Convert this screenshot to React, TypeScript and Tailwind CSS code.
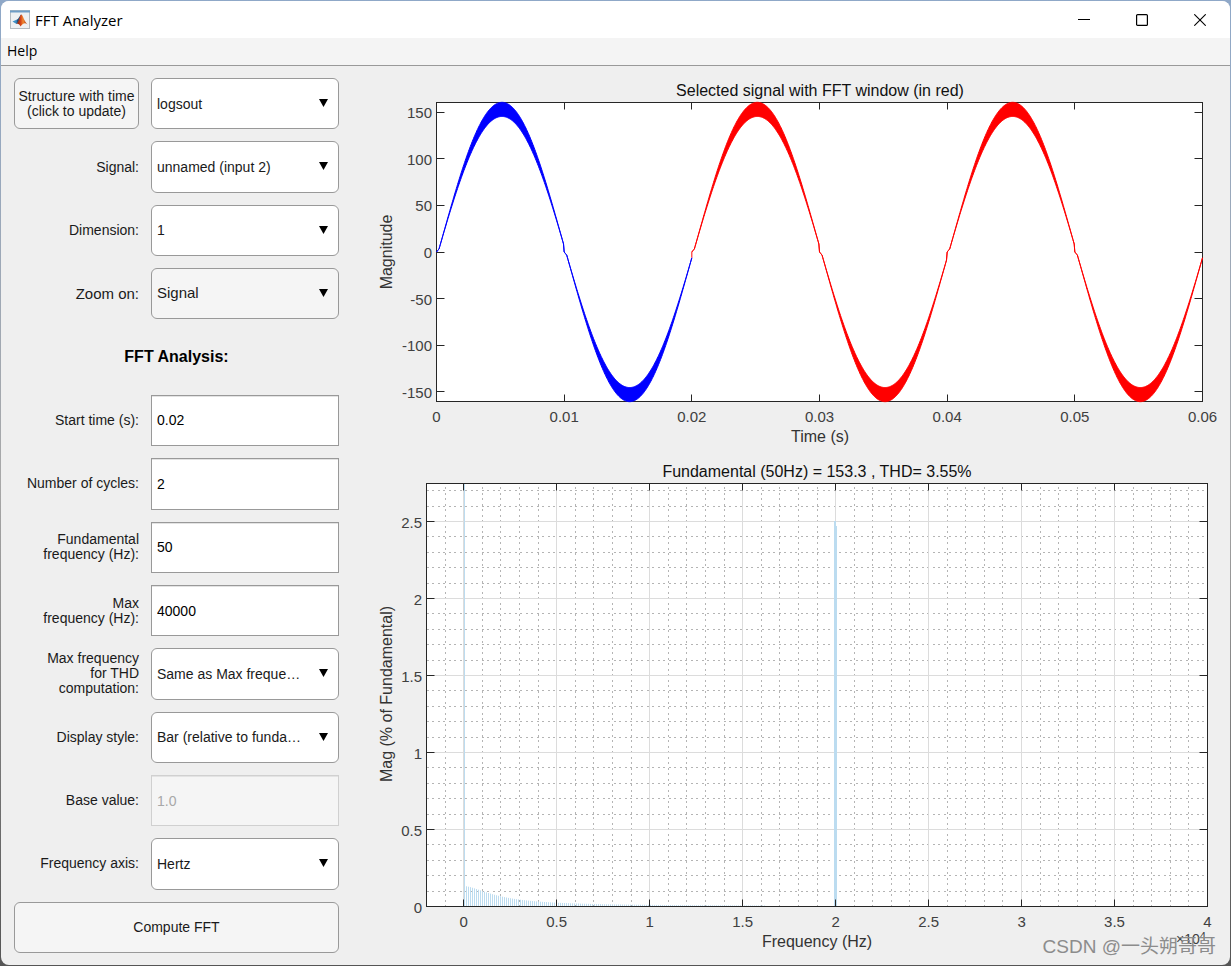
import type { ReactNode } from "react";

const selectRows = {
  data: ["logsout"],
  signal: ["unnamed (input 2)"],
  dimension: ["1"],
  zoom: ["Signal", "FFT window"],
  thd: ["Same as Max freque…"],
  display: ["Bar (relative to funda…"],
  axis: ["Hertz", "Harmonic order"],
};

/* ---------- form controls ---------- */

function Row({ id, label, large, children }: { id: string; label: string; large?: boolean; children: ReactNode }) {
  return (
    <div className="flex items-center gap-3">
      <label
        htmlFor={id}
        className={`w-[125px] whitespace-pre-line text-right leading-[15px] ${large ? "text-[15px]" : "text-sm"}`}
      >
        {label}
      </label>
      {children}
    </div>
  );
}

function Select({ id, options, large, label }: { id: string; options: string[]; large?: boolean; label?: string }) {
  return (
    <div className="relative min-w-0 flex-1 self-stretch">
      <select
        id={id}
        aria-label={label}
        className={`h-full w-full appearance-none rounded-md border border-[#999] pl-[5px] pr-8 ${
          large ? "bg-[#f5f5f5] text-[15px]" : "bg-white text-sm"
        }`}
      >
        {options.map((o) => (
          <option key={o}>{o}</option>
        ))}
      </select>
      <svg viewBox="0 0 9 8" className="pointer-events-none absolute right-[11px] top-[21px] h-2 w-[9px]" aria-hidden="true">
        <path d="M0 0h9L4.5 8z" fill="#000" />
      </svg>
    </div>
  );
}

function TextField({ id, value, disabled }: { id: string; value: string; disabled?: boolean }) {
  return (
    <input
      id={id}
      type="text"
      defaultValue={value}
      disabled={disabled}
      className="min-w-0 flex-1 self-stretch border border-[#999] bg-white px-[5px] text-sm text-black shadow-[inset_0_1px_0_#e3e3e3] disabled:border-[#d0d0d0] disabled:bg-[#f5f5f5] disabled:text-[#a8a8a8]"
    />
  );
}

/* ---------- time signal ---------- */

const T = { left: 85.5, right: 851.5, top: 24.5, bottom: 323.5, yMax: 160.7 };
const tx = (t: number) => T.left + (t / 0.06) * (T.right - T.left);
const ty = (v: number) => (T.top + T.bottom) / 2 - (v / T.yMax) * ((T.bottom - T.top) / 2);

// fundamental with dead-time distortion at each zero crossing, plus PWM ripple
function envelope(from: number, to: number) {
  const upper: string[] = [];
  const lower: string[] = [];
  const step = 0.00005;
  const steps = Math.round((to - from) / step);
  const wave = (u: number) => Math.sin(100 * Math.PI * (u - 0.00013));
  for (let i = 0; i <= steps; i++) {
    const t = from + i * step;
    const half = Math.floor(t / 0.01 + 1e-6);
    const last = i === steps;
    const u = last ? 0.01 : t - half * 0.01;
    const sign = (last ? half - 1 : half) % 2 === 0 ? 1 : -1;
    const s = Math.max(0, u < 0.0002 ? (wave(0.0002) * u) / 0.0002 : wave(u));
    const ripple = 7.6 * Math.pow(s, 1.6);
    upper.push(`${tx(t).toFixed(2)},${ty(sign * 153.3 * s + ripple).toFixed(2)}`);
    lower.unshift(`${tx(t).toFixed(2)},${ty(sign * 153.3 * s - ripple).toFixed(2)}`);
  }
  return [...upper, ...lower].join(" ");
}

function SignalChart() {
  const xTicks = [0, 0.01, 0.02, 0.03, 0.04, 0.05, 0.06];
  const yTicks = [-150, -100, -50, 0, 50, 100, 150];
  return (
    <svg viewBox="0 0 879 372" className="w-full" role="img" aria-label="Selected signal">
      <rect x={T.left} y={T.top} width={T.right - T.left} height={T.bottom - T.top} fill="#fff" />
      <g stroke="#262626">
        <rect x={T.left} y={T.top} width={T.right - T.left} height={T.bottom - T.top} fill="none" />
        {xTicks.map((t) => {
          const x = Math.floor(tx(t)) + 0.5;
          return <path key={t} d={`M${x} ${T.top}v7M${x} ${T.bottom}v-7`} />;
        })}
        {yTicks.map((v) => {
          const y = Math.floor(ty(v)) + 0.5;
          return <path key={v} d={`M${T.left} ${y}h8M${T.right} ${y}h-8`} />;
        })}
      </g>
      <polygon points={envelope(0, 0.02)} fill="#00f" stroke="#00f" />
      <polygon points={envelope(0.02, 0.06)} fill="#f00" stroke="#f00" />
      <path d={`M${tx(0.02)} ${ty(-6)}V${ty(0)}`} stroke="#f00" />
      <g fontSize="15" fill="#404040" textAnchor="middle">
        {xTicks.map((t) => (
          <text key={t} x={tx(t)} y="344">{t}</text>
        ))}
      </g>
      <g fontSize="15" fill="#404040" textAnchor="end">
        {yTicks.map((v) => (
          <text key={v} x="81" y={ty(v) + 6}>{v}</text>
        ))}
      </g>
      <g fontSize="16" textAnchor="middle">
        <text x="469" y="18" fill="#111">Selected signal with FFT window (in red)</text>
        <text x="469" y="364" fill="#333">Time (s)</text>
        <text transform="translate(41 174) rotate(-90)" fill="#333">Magnitude</text>
      </g>
    </svg>
  );
}

/* ---------- spectrum ---------- */

const F = { left: 75.5, right: 856.5, top: 33.5, bottom: 456.5 };
const fx = (f: number) => F.left + ((f + 0.2) / 4.2) * (F.right - F.left);
const fy = (m: number) => F.bottom - m * 154;
const snap = (n: number) => Math.floor(n) + 0.5;

function SpectrumChart() {
  const xTicks = Array.from({ length: 9 }, (_, i) => i / 2);
  const yTicks = Array.from({ length: 6 }, (_, i) => i / 2);
  const xMinor = Array.from({ length: 41 }, (_, i) => i - 1).filter((n) => n % 5 !== 0).map((n) => n / 10);
  const yMinor = Array.from({ length: 27 }, (_, i) => i + 1).filter((n) => n % 5 !== 0).map((n) => n / 10);
  const harmonics = Array.from({ length: 150 }, (_, i) => 3 + i * 2);
  return (
    <svg viewBox="0 0 879 503" className="w-full" role="img" aria-label="Signal spectrum">
      <rect x={F.left} y={F.top} width={F.right - F.left} height={F.bottom - F.top} fill="#fff" />
      <g stroke="#b4b4b4" strokeDasharray="2 3 2 4">
        {xMinor.map((f) => (
          <path key={f} d={`M${snap(fx(f))} ${F.bottom + 0.5}V${F.top}`} />
        ))}
        {yMinor.map((m) => (
          <path key={m} d={`M${F.left + 0.5} ${snap(fy(m))}H${F.right}`} />
        ))}
      </g>
      <g stroke="#dcdcdc">
        {xTicks.slice(0, -1).map((f) => (
          <path key={f} d={`M${snap(fx(f))} ${F.bottom}V${F.top}`} />
        ))}
        {yTicks.slice(1).map((m) => (
          <path key={m} d={`M${F.left} ${snap(fy(m))}H${F.right}`} />
        ))}
      </g>
      <g fill="#bcdcf0">
        <rect x="113" y="34" width="1" height="422" />
        {harmonics.map((d) => {
          const h = 20 / (1 + Math.pow(d / 36, 1.7));
          return <rect key={d} x={112 + d} y={456 - h} width="1" height={h} />;
        })}
        <rect x="483" y="71" width="2" height="385" />
        <rect x="485" y="76" width="1" height="380" />
      </g>
      <g stroke="#262626">
        <rect x={F.left} y={F.top} width={F.right - F.left} height={F.bottom - F.top} fill="none" />
        {xTicks.map((f) => (
          <path key={f} d={`M${snap(fx(f))} ${F.top}v7M${snap(fx(f))} ${F.bottom}v-7`} />
        ))}
        {yTicks.map((m) => (
          <path key={m} d={`M${F.left} ${snap(fy(m))}h8M${F.right} ${snap(fy(m))}h-8`} />
        ))}
      </g>
      <g fontSize="15" fill="#404040" textAnchor="middle">
        {xTicks.map((f) => (
          <text key={f} x={fx(f)} y="477">{f}</text>
        ))}
      </g>
      <g fontSize="15" fill="#404040" textAnchor="end">
        {yTicks.map((m) => (
          <text key={m} x="71" y={fy(m) + 6}>{m}</text>
        ))}
      </g>
      <text x="825" y="494" fontSize="14" fill="#404040">
        ×10<tspan dy="-4" fontSize="11">4</tspan>
      </text>
      <g fontSize="16" textAnchor="middle">
        <text x="466" y="27" fill="#111">Fundamental (50Hz) = 153.3 , THD= 3.55%</text>
        <text x="466" y="497" fill="#333">Frequency (Hz)</text>
        <text transform="translate(41 244) rotate(-90)" fill="#333">Mag (% of Fundamental)</text>
      </g>
    </svg>
  );
}

/* ---------- window chrome ---------- */

function MatlabIcon() {
  return (
    <svg viewBox="0 0 20 20" className="size-5" aria-hidden="true">
      <defs>
        <linearGradient id="peak" x1="0" x2="1">
          <stop offset="0" stopColor="#7a1e12" />
          <stop offset="0.4" stopColor="#d9481a" />
          <stop offset="0.6" stopColor="#f08a32" />
          <stop offset="1" stopColor="#a3260f" />
        </linearGradient>
      </defs>
      <rect x="0.5" y="0.5" width="19" height="18" fill="#eef0f2" stroke="#b4bac0" />
      <path d="M0 .5h20v2H0z" fill="#6f9dc6" />
      <path d="M2.500 11.500L7 9.500 9 11 6.500 14z" fill="#3f8fc4" />
      <path d="M7 9.500C9 9 9.700 5 11.300 4.500L9 11 6.500 14z" fill="#22507e" />
      <path d="M6.500 14C9 12 9.500 5.500 11.300 4.500 13 5 14 11 17.500 14.500 15 12.500 13.500 13 10.500 16.500 9.500 14.500 8.500 13.500 6.500 14z" fill="url(#peak)" />
    </svg>
  );
}

function TitleBar() {
  return (
    <header className="flex h-[37px] items-center bg-white pl-[9px]">
      <MatlabIcon />
      <h1 className="flex-1 pl-[5px] font-['Open_Sans','Noto_Sans',sans-serif] text-[15px] leading-5 text-black">FFT Analyzer</h1>
      <div className="flex items-center self-stretch pr-[1px]">
        <button type="button" aria-label="Minimize" className="grid h-full w-[58px] place-items-center">
          <svg viewBox="0 0 12 12" className="size-3" stroke="#000" fill="none"><path d="M0 5.500h12" /></svg>
        </button>
        <button type="button" aria-label="Maximize" className="grid h-full w-[58px] place-items-center">
          <svg viewBox="0 0 12 12" className="size-3" stroke="#000" strokeWidth="1.200" fill="none">
            <rect x="0.600" y="0.600" width="10.800" height="10.800" rx="1" />
          </svg>
        </button>
        <button type="button" aria-label="Close" className="grid h-full w-[58px] place-items-center">
          <svg viewBox="0 0 12 12" className="size-3" stroke="#000" strokeWidth="1.100" fill="none">
            <path d="M.3.300l11.400 11.400M11.700.300L.3 11.700" />
          </svg>
        </button>
      </div>
    </header>
  );
}

export default function App() {
  return (
    <div className="flex min-h-screen bg-linear-to-b from-[#8fa8c8] via-[#a8a8a8] to-[#555] p-px font-['Liberation_Sans',Arial,sans-serif] text-[#1a1a1a]">
      <div className="relative flex flex-1 flex-col overflow-hidden rounded-lg bg-[#efefef]">
        <TitleBar />
        <nav className="flex h-7 items-center border-b border-[#999] bg-[#f4f4f4] px-[6px]">
          <button type="button" className="pb-px font-['Open_Sans','Noto_Sans',sans-serif] text-sm leading-5 text-black">Help</button>
        </nav>

        <main className="flex flex-1 gap-3 py-3 pl-[13px]">
          <form className="grid w-[325px] shrink-0 auto-rows-fr grid-cols-1 gap-3" onSubmit={(e) => e.preventDefault()}>
            <div className="flex items-center gap-3">
              <button
                type="button"
                className="w-[125px] self-stretch whitespace-nowrap rounded-md border border-[#999] bg-[#f5f5f5] text-sm leading-[15px]"
              >
                Structure with time
                <br />
                (click to update)
              </button>
              <Select id="data" label="Structure with time" options={selectRows.data} />
            </div>
            <Row id="signal" label="Signal:"><Select id="signal" options={selectRows.signal} /></Row>
            <Row id="dimension" label="Dimension:"><Select id="dimension" options={selectRows.dimension} /></Row>
            <Row id="zoom" label="Zoom on:" large><Select id="zoom" options={selectRows.zoom} large /></Row>
            <h2 className="flex items-center justify-center text-base font-bold text-black">FFT Analysis:</h2>
            <Row id="start" label="Start time (s):"><TextField id="start" value="0.02" /></Row>
            <Row id="cycles" label="Number of cycles:"><TextField id="cycles" value="2" /></Row>
            <Row id="fundamental" label={"Fundamental\nfrequency (Hz):"}><TextField id="fundamental" value="50" /></Row>
            <Row id="max" label={"Max\nfrequency (Hz):"}><TextField id="max" value="40000" /></Row>
            <Row id="thd" label={"Max frequency\nfor THD\ncomputation:"}><Select id="thd" options={selectRows.thd} /></Row>
            <Row id="display" label="Display style:"><Select id="display" options={selectRows.display} /></Row>
            <Row id="base" label="Base value:"><TextField id="base" value="1.0" disabled /></Row>
            <Row id="axis" label="Frequency axis:"><Select id="axis" options={selectRows.axis} /></Row>
            <button type="submit" className="rounded-md border border-[#999] bg-[#f5f5f5] text-sm">
              Compute FFT
            </button>
          </form>

          <section className="flex min-w-0 flex-1 flex-col">
            <SignalChart />
            <SpectrumChart />
          </section>
        </main>

        <p className="pointer-events-none absolute bottom-1 right-[14px] font-['Liberation_Sans','Noto_Sans_CJK_SC',sans-serif] text-[19px] leading-7 text-[#8c8c8c]">
          CSDN @一头朔哥哥
        </p>
      </div>
    </div>
  );
}
